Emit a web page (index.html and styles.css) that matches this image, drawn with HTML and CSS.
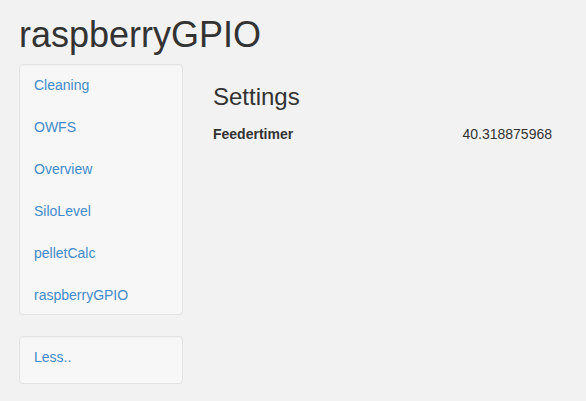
FILE: index.html
```html
<!DOCTYPE html>
<html>
<head>
<meta charset="utf-8">
<link rel="stylesheet" href="styles.css">
</head>
<body>
<div class="page">
  <h1 class="title">raspberryGPIO</h1>
  <div class="layout">
    <aside class="sidebar">
      <nav class="well">
        <a href="#">Cleaning</a>
        <a href="#">OWFS</a>
        <a href="#">Overview</a>
        <a href="#">SiloLevel</a>
        <a href="#">pelletCalc</a>
        <a href="#">raspberryGPIO</a>
      </nav>
      <nav class="well well-less">
        <a href="#">Less..</a>
      </nav>
    </aside>
    <main class="main">
      <h2 class="heading">Settings</h2>
      <div class="setting">
        <span class="key">Feedertimer</span>
        <span class="value">40.318875968</span>
      </div>
    </main>
  </div>
</div>
</body>
</html>
```

FILE: styles.css
```css
html, body {
  margin: 0;
  padding: 0;
  background: #f2f2f2;
}
body {
  font-family: "Liberation Sans", Arial, sans-serif;
  font-size: 14px;
  line-height: 20px;
  color: #333333;
}
.page {
  padding: 0 19px;
}
.title {
  margin: 14.7px 0 10px 0;
  font-size: 36px;
  font-weight: 500;
  line-height: 1.1;
  color: #333333;
}
.layout {
  display: flex;
  align-items: flex-start;
}
.sidebar {
  width: 164px;
  flex: none;
  display: flex;
  flex-direction: column;
  gap: 21px;
}
.well {
  display: flex;
  flex-direction: column;
  gap: 22px;
  padding: 10px 0 9px 14px;
  background: #f7f7f7;
  border: 1px solid #e3e3e3;
  border-radius: 4px;
  box-shadow: inset 0 1px 1px rgba(0, 0, 0, 0.03);
}
.well-less {
  padding-bottom: 16px;
}
.well a {
  color: #428bca;
  text-decoration: none;
  line-height: 20px;
}
.main {
  flex: 1;
  padding: 0 15px 0 30px;
}
.heading {
  margin: 20px 0 10px;
  font-size: 24px;
  font-weight: 500;
  line-height: 1.1;
}
.setting {
  display: flex;
  justify-content: space-between;
  padding-top: 3px;
}
.key {
  font-weight: bold;
}
```
